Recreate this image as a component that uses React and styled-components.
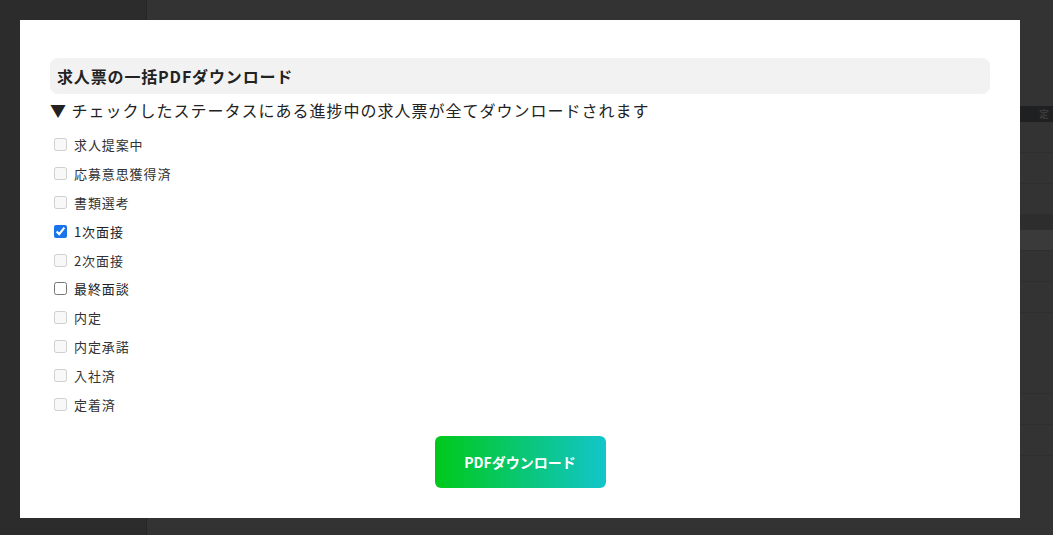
import React from 'react';
import styled, { createGlobalStyle } from 'styled-components';

const GlobalStyle = createGlobalStyle`
  html, body {
    margin: 0;
    padding: 0;
    background: #333333;
    font-family: 'Noto Sans CJK JP', 'Noto Sans', sans-serif;
  }
`;

const Page = styled.div`
  display: flex;
  width: 1053px;
  height: 535px;
  overflow: hidden;
`;

const Sidebar = styled.div`
  width: 146px;
  background-color: #2c2c2c;
  border-right: 1px solid #262626;
`;

const Main = styled.div`
  flex: 1;
  background-color: #333333;
  padding-top: 106px;
`;

const TableHead = styled.div`
  height: 16px;
  background-color: #1f2022;
  color: #3a3a3a;
  font-size: 10px;
  font-weight: 700;
  text-align: right;
  padding-right: 4px;
  line-height: 16px;
`;

const TableRow = styled.div`
  height: ${p => p.h}px;
  background-color: ${p => p.bg || '#333333'};
  border-bottom: 1px solid #2e2e2e;
`;

const Overlay = styled.div`
  position: fixed;
  inset: 0;
  display: flex;
  padding: 20px;
`;

const Modal = styled.div`
  width: 1000px;
  height: 498px;
  background: #ffffff;
  padding: 38px 30px 0 30px;
  box-sizing: border-box;
  display: flex;
  flex-direction: column;
`;

const TitleBox = styled.div`
  background-color: #f2f2f2;
  border-radius: 8px;
  height: 36px;
  padding: 0 7px;
  display: flex;
  align-items: center;
`;

const Title = styled.h2`
  margin: 0;
  font-size: 16px;
  font-weight: 700;
  color: #222222;
  letter-spacing: 0.85px;
`;

const Notice = styled.p`
  margin: 5px 0 9px 0;
  font-size: 16px;
  letter-spacing: 1px;
  color: #222222;
  line-height: 22px;
`;

const StatusList = styled.div`
  display: flex;
  flex-direction: column;
`;

const StatusRow = styled.label`
  display: flex;
  align-items: center;
  height: 28.9px;
  font-size: 13px;
  letter-spacing: 0.9px;
  color: ${p => (p.disabled ? '#333333' : '#222222')};
`;

const Check = styled.input`
  width: 13px;
  height: 13px;
  margin: 0 7px 0 4px;
  accent-color: #1a73e8;
`;

const ButtonWrap = styled.div`
  display: flex;
  justify-content: center;
  margin-top: 17px;
`;

const DownloadButton = styled.button`
  width: 171px;
  height: 52px;
  border: none;
  border-radius: 6px;
  background: linear-gradient(90deg, #00c91a 0%, #12c5cb 100%);
  color: #ffffff;
  font-family: 'Noto Sans CJK JP', sans-serif;
  font-size: 14px;
  font-weight: 700;
  cursor: pointer;
`;

const statuses = [
  { name: '求人提案中', disabled: true },
  { name: '応募意思獲得済', disabled: true },
  { name: '書類選考', disabled: true },
  { name: '1次面接', checked: true },
  { name: '2次面接', disabled: true },
  { name: '最終面談' },
  { name: '内定', disabled: true },
  { name: '内定承諾', disabled: true },
  { name: '入社済', disabled: true },
  { name: '定着済', disabled: true }
];

const rows = [
  { h: 30 }, { h: 30 }, { h: 30 }, { h: 14, bg: '#2d2d2d' }, { h: 20, bg: '#3a3a3a' },
  { h: 30 }, { h: 30 }, { h: 80 }, { h: 30 }, { h: 30 }
];

const App = () => {
  return (
    <>
      <GlobalStyle />
      <Page>
        <Sidebar />
        <Main>
          <TableHead>定</TableHead>
          {rows.map((r, i) => (
            <TableRow key={i} h={r.h} bg={r.bg} />
          ))}
        </Main>
      </Page>
      <Overlay>
        <Modal>
          <TitleBox>
            <Title>求人票の一括PDFダウンロード</Title>
          </TitleBox>
          <Notice>▼ チェックしたステータスにある進捗中の求人票が全てダウンロードされます</Notice>
          <StatusList>
            {statuses.map(s => (
              <StatusRow key={s.name} disabled={s.disabled}>
                <Check type='checkbox' disabled={s.disabled} defaultChecked={s.checked} />
                {s.name}
              </StatusRow>
            ))}
          </StatusList>
          <ButtonWrap>
            <DownloadButton>PDFダウンロード</DownloadButton>
          </ButtonWrap>
        </Modal>
      </Overlay>
    </>
  );
};

export default App;
